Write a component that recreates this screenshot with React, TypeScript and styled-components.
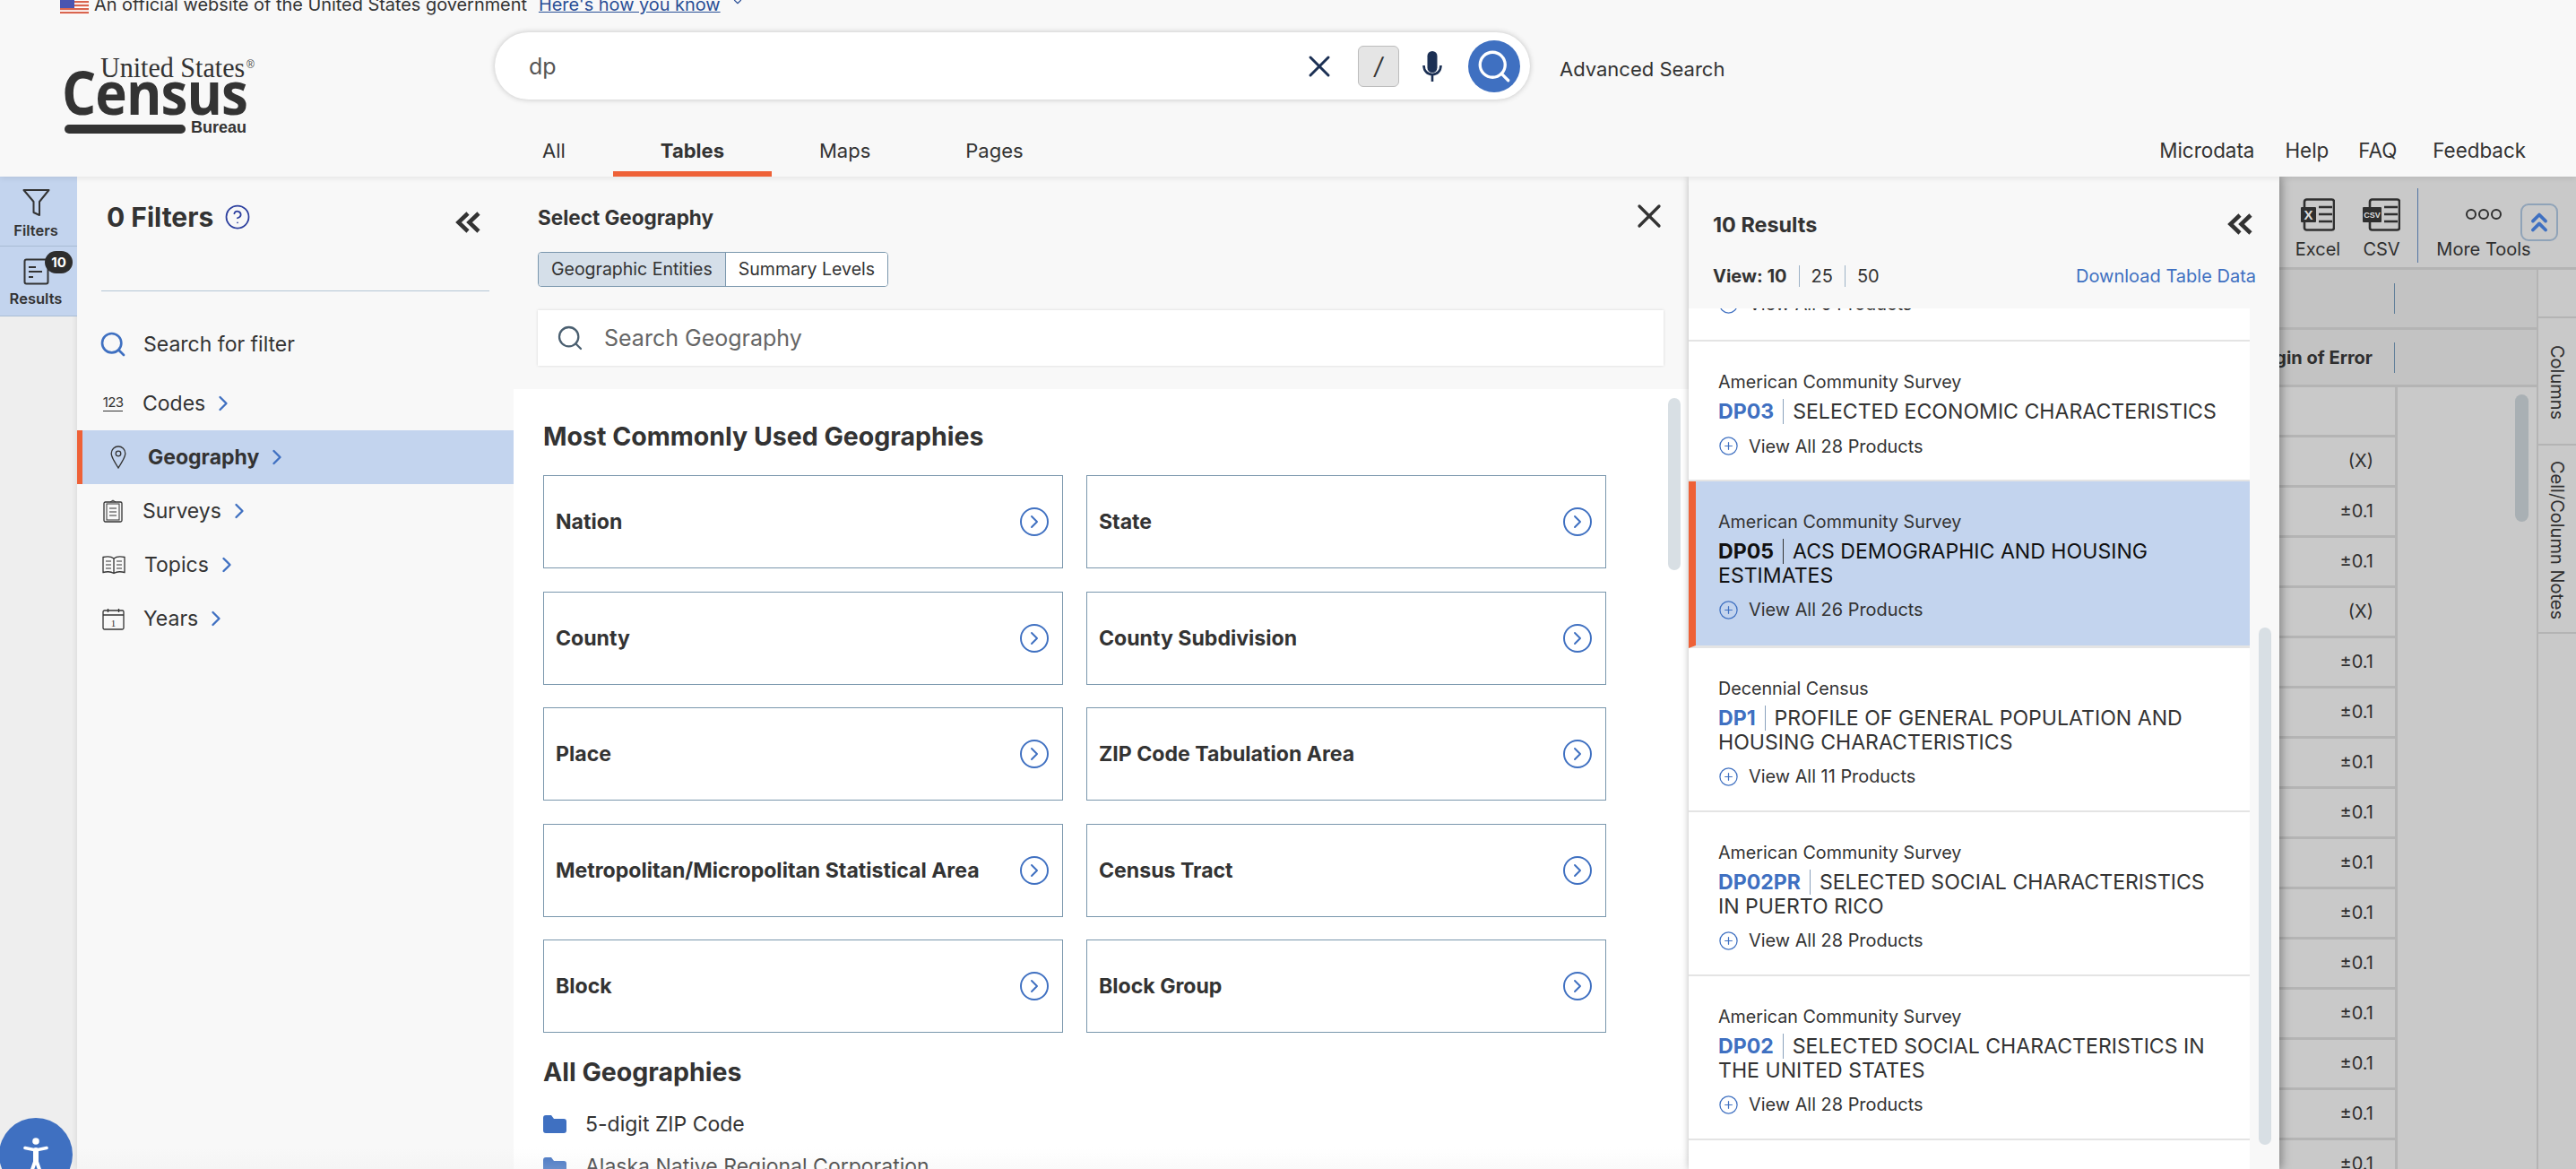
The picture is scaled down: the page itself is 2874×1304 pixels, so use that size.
import * as React from 'react';
import styled, { createGlobalStyle } from 'styled-components';
import {
  ChevronDown,
  ChevronRight,
  ChevronsUp,
  CircleChevronRight,
  CirclePlus,
  CircleHelp,
  Search,
  X,
} from 'lucide-react';

const Color = {
  text: '#333333',
  blue: '#3f70c1',
  orange: '#ee6137',
  selected: '#c3d4ee',
  panel: '#f8f8f8',
  cardBorder: '#7a97ad',
  dim: '#c9c9c9',
  dimHeader: '#c3c3c3',
  dimLine: '#b4b4b4',
};

const FONT = '"Inter", "Liberation Sans", sans-serif';

const GlobalStyle = createGlobalStyle`
  html, body { margin: 0; padding: 0; background: #f8f8f8; }
  body { font-family: ${FONT}; color: ${Color.text}; }
  * { box-sizing: border-box; }
`;

const S = {
  Page: styled.div`
    position: relative;
    width: 2874px;
    height: 1304px;
    overflow: hidden;
    display: flex;
    flex-direction: column;
  `,
  Header: styled.header`
    flex: 0 0 197px;
    background: ${Color.panel};
    display: flex;
    flex-direction: column;
    position: relative;
    z-index: 3;
    box-shadow: 0 2px 6px rgba(0, 0, 0, 0.08);
  `,
  Banner: styled.div`
    flex: 0 0 18px;
    padding-left: 67px;
    display: flex;
    align-items: flex-start;
    gap: 6px;
    overflow: hidden;
    font-size: 19.9px;
    line-height: 24px;
    white-space: nowrap;
  `,
  BannerText: styled.span`
    margin-top: -7px;
  `,
  BannerLink: styled.a`
    margin: -7px 0 0 7px;
    color: #2a4f96;
    text-decoration: underline;
  `,
  BannerChevron: styled(ChevronDown)`
    margin: -5px 0 0 6px;
    color: #2a4f96;
  `,
  Masthead: styled.div`
    flex: 0 0 98px;
    padding-left: 70px;
    display: flex;
    align-items: flex-start;
  `,
  Logo: styled.div`
    position: relative;
    flex: 0 0 482px;
    height: 98px;
  `,
  LogoTop: styled.span`
    position: absolute;
    left: 42px;
    top: 43px;
    font: 400 31px/30px 'Liberation Serif', serif;
    color: #333;
    transform: scaleX(0.97);
    transform-origin: left center;
    white-space: nowrap;
  `,
  LogoReg: styled.span`
    position: absolute;
    left: 205px;
    top: 47px;
    font: 400 12px/14px 'Liberation Sans', sans-serif;
    color: #444;
  `,
  LogoMain: styled.span`
    position: absolute;
    left: -1px;
    top: 49px;
    font: 700 66px/70px 'Open Sans', sans-serif;
    letter-spacing: -1px;
    color: #333;
    transform: scaleX(0.91);
    transform-origin: left center;
  `,
  LogoBar: styled.span`
    position: absolute;
    left: 2px;
    top: 121px;
    width: 135px;
    height: 10px;
    border-radius: 5px;
    background: #333;
  `,
  LogoBureau: styled.span`
    position: absolute;
    left: 143px;
    top: 114px;
    font: 700 18px/20px 'Liberation Sans', sans-serif;
    color: #333;
  `,
  SearchBar: styled.div`
    flex: 0 0 1155px;
    height: 75px;
    margin-top: 18px;
    padding: 0 11px 0 38px;
    background: #fff;
    border-radius: 38px;
    box-shadow: 0 0 6px rgba(0, 0, 0, 0.22);
    display: flex;
    align-items: center;
    font-size: 25px;
    color: #555;
  `,
  SearchValue: styled.span`
    flex: 1;
  `,
  ClearIcon: styled(X)`
    color: #1c3054;
    margin-right: 23px;
  `,
  SlashKey: styled.span`
    width: 46px;
    height: 46px;
    background: #e5e5e5;
    border: 1px solid #bdbdbd;
    border-radius: 6px;
    display: flex;
    align-items: center;
    justify-content: center;
    font-size: 26px;
    font-style: italic;
    color: #333;
    margin-right: 26px;
  `,
  MicSvg: styled.svg`
    margin-right: 29px;
  `,
  SearchButton: styled.span`
    width: 58px;
    height: 58px;
    border-radius: 50%;
    background: ${Color.blue};
    color: #fff;
    display: flex;
    align-items: center;
    justify-content: center;
  `,
  AdvancedSearch: styled.a`
    margin: 46px 0 0 33px;
    font-size: 22px;
    line-height: 26px;
  `,
  NavRow: styled.nav`
    flex: 1;
    padding: 0 56px 0 552px;
    display: flex;
    align-items: stretch;
  `,
  Tab: styled.a<{ $active?: boolean }>`
    padding: 37px 53px 0;
    font-size: 22px;
    line-height: 30px;
    font-weight: ${({ $active }) => ($active ? 700 : 400)};
    border-bottom: 6px solid ${({ $active }) => ($active ? Color.orange : 'transparent')};
  `,
  NavSpacer: styled.div`
    flex: 1;
  `,
  NavLink: styled.a<{ $gap: number }>`
    margin-left: ${({ $gap }) => $gap}px;
    padding-top: 37px;
    font-size: 22.4px;
    line-height: 30px;
  `,

  Workspace: styled.main`
    flex: 1;
    display: flex;
    min-height: 0;
  `,

  Rail: styled.div`
    flex: 0 0 86px;
    background: #eeeeee;
  `,
  RailItem: styled.div`
    position: relative;
    height: 78px;
    background: ${Color.selected};
    border-bottom: 1px solid #a9bcd4;
    display: flex;
    flex-direction: column;
    align-items: center;
    padding: 13px 6px 0 0;
    font-size: 16.5px;
    font-weight: 600;
    line-height: 18px;
    gap: 6px;
  `,
  RailBadge: styled.span`
    position: absolute;
    left: 50px;
    top: 5px;
    width: 31px;
    height: 25px;
    border-radius: 13px;
    background: #2d2d2d;
    color: #fff;
    font-size: 15px;
    font-weight: 700;
    line-height: 25px;
    text-align: center;
  `,

  FilterPanel: styled.aside`
    flex: 0 0 487px;
    background: ${Color.panel};
    box-shadow: -2px 0 5px rgba(0, 0, 0, 0.07), 1px 0 2px rgba(0, 0, 0, 0.05);
    display: flex;
    flex-direction: column;
  `,
  FilterHead: styled.div`
    flex: 0 0 128px;
    margin: 0 27px;
    padding: 27px 0 0 6px;
    border-bottom: 1px solid #b4c6d6;
    display: flex;
    align-items: flex-start;
    font-size: 30px;
    font-weight: 700;
    line-height: 36px;
  `,
  HelpIcon: styled(CircleHelp)`
    color: #2c3f9e;
    margin: 3px 0 0 12px;
  `,
  FilterCollapse: styled.span`
    margin: 12px 10px 0 auto;
    display: flex;
  `,
  FilterSearch: styled.div`
    flex: 0 0 66px;
    margin: 26px 0 3px;
    padding-left: 24px;
    display: flex;
    align-items: center;
    gap: 18px;
    font-size: 23px;
    color: #333;
  `,
  FilterRow: styled.div<{ $active?: boolean }>`
    flex: 0 0 60px;
    display: flex;
    align-items: center;
    padding-left: 28px;
    font-size: 23px;
    font-weight: ${({ $active }) => ($active ? 700 : 400)};
    background: ${({ $active }) => ($active ? Color.selected : 'transparent')};
    border-left: ${({ $active }) => ($active ? `6px solid ${Color.orange}` : 'none')};
  `,
  FilterIcon: styled.span`
    flex: 0 0 24px;
    margin-right: 21px;
    display: flex;
    justify-content: center;
  `,
  CodesGlyph: styled.span`
    font-size: 15px;
    line-height: 15px;
    padding-bottom: 2px;
    border-bottom: 1px solid #333;
    letter-spacing: -0.6px;
  `,
  RowChevron: styled(ChevronRight)`
    color: ${Color.blue};
    margin-left: 6px;
  `,

  GeoPanel: styled.section`
    position: relative;
    flex: 0 0 1311px;
    background: #fff;
    display: flex;
    flex-direction: column;
    overflow: hidden;
  `,
  GeoHead: styled.div`
    flex: 0 0 237px;
    background: ${Color.panel};
    padding: 32px 28px 0 27px;
    display: flex;
    flex-direction: column;
    align-items: flex-start;
  `,
  GeoTitle: styled.h2`
    margin: 0;
    font-size: 22.5px;
    line-height: 28px;
    font-weight: 700;
  `,
  GeoClose: styled(X)`
    position: absolute;
    right: 22px;
    top: 22px;
    color: #333;
  `,
  Toggle: styled.div`
    margin-top: 24px;
    display: flex;
    height: 39px;
    border: 1px solid ${Color.cardBorder};
    border-radius: 4px;
    overflow: hidden;
    background: #fff;
  `,
  ToggleItem: styled.span<{ $active?: boolean }>`
    padding: 0 14px;
    font-size: 19.5px;
    line-height: 37px;
    background: ${({ $active }) => ($active ? '#d5dfe9' : '#fff')};
    border-right: ${({ $active }) => ($active ? `1px solid ${Color.cardBorder}` : 'none')};
  `,
  GeoSearch: styled.div`
    margin-top: 26px;
    align-self: stretch;
    height: 62px;
    background: #fff;
    box-shadow: 0 0 3px rgba(0, 0, 0, 0.14);
    padding-left: 20px;
    display: flex;
    align-items: center;
    gap: 22px;
    font-size: 25px;
    color: #666;
  `,
  GeoBody: styled.div`
    flex: 1;
    padding: 35px 0 0 33px;
    display: flex;
    flex-direction: column;
    min-height: 0;
  `,
  SectionTitle: styled.h3`
    margin: 0;
    font-size: 28.5px;
    line-height: 36px;
    font-weight: 700;
  `,
  Cards: styled.div`
    margin-top: 25px;
    display: grid;
    grid-template-columns: 580px 580px;
    grid-auto-rows: 104px;
    column-gap: 26px;
    row-gap: 25.5px;
  `,
  Card: styled.div`
    padding: 0 13px 0 13px;
    background: #fff;
    border: 1px solid ${Color.cardBorder};
    display: flex;
    align-items: center;
    justify-content: space-between;
    font-size: 23.1px;
    font-weight: 700;
  `,
  CardIcon: styled(CircleChevronRight)`
    color: ${Color.blue};
  `,
  AllTitle: styled.h3`
    margin: 26px 0 0;
    font-size: 28.5px;
    line-height: 36px;
    font-weight: 700;
  `,
  FolderRow: styled.div`
    margin-top: 26px;
    height: 36px;
    display: flex;
    align-items: center;
    gap: 21px;
    font-size: 23px;
    white-space: nowrap;
    & + & {
      margin-top: 19px;
    }
  `,
  GeoScroll: styled.div`
    position: absolute;
    right: 9px;
    top: 247px;
    width: 14px;
    height: 192px;
    border-radius: 7px;
    background: #d8dfe4;
  `,

  ResultsPanel: styled.section`
    position: relative;
    z-index: 2;
    flex: 0 0 659px;
    background: ${Color.panel};
    box-shadow: 0 0 8px rgba(0, 0, 0, 0.18), 4px 0 10px rgba(0, 0, 0, 0.22);
    display: flex;
    flex-direction: column;
    overflow: hidden;
  `,
  ResultsHead: styled.div`
    flex: 0 0 147px;
    padding: 0 26px 0 27px;
    display: flex;
    flex-direction: column;
  `,
  ResultsTitleRow: styled.div`
    height: 86px;
    padding: 20px 4px 0 0;
    display: flex;
    align-items: center;
    justify-content: space-between;
    font-size: 23.4px;
    font-weight: 700;
  `,
  ViewRow: styled.div`
    display: flex;
    align-items: center;
    font-size: 20px;
    height: 30px;
    margin-top: 10px;
  `,
  ViewOption: styled.span<{ $current?: boolean }>`
    font-weight: ${({ $current }) => ($current ? 700 : 400)};
    padding: 0 13px;
    line-height: 24px;
    border-left: ${({ $current }) => ($current ? 'none' : '1px solid #9db2c6')};
    &:first-child {
      padding-left: 0;
    }
  `,
  DownloadLink: styled.a`
    margin-left: auto;
    color: ${Color.blue};
  `,
  ResultsList: styled.div`
    flex: 1;
    width: 626px;
    background: #fff;
    display: flex;
    flex-direction: column;
    min-height: 0;
  `,
  ClippedItem: styled.div`
    flex: 0 0 37px;
    display: flex;
    flex-direction: column;
    justify-content: flex-end;
    padding: 0 0 27px 33px;
    overflow: hidden;
    border-bottom: 2px solid #e4e4e4;
  `,
  ResultItem: styled.article<{ $selected?: boolean; $tall?: boolean }>`
    flex: 0 0 auto;
    padding: 32px 28px 0 ${({ $selected }) => ($selected ? '25px' : '33px')};
    height: ${({ $selected, $tall }) => ($selected ? '186px' : $tall ? '183px' : '156px')};
    background: ${({ $selected }) => ($selected ? Color.selected : '#fff')};
    border-left: ${({ $selected }) => ($selected ? `8px solid ${Color.orange}` : 'none')};
    border-bottom: ${({ $selected }) => ($selected ? '3px solid #e4e4e4' : '2px solid #e4e4e4')};
  `,
  Source: styled.div`
    font-size: 19.7px;
    line-height: 26px;
  `,
  ItemTitle: styled.div<{ $selected?: boolean }>`
    margin-top: 7px;
    font-size: 23.1px;
    line-height: 26.5px;
    color: ${({ $selected }) => ($selected ? '#111' : Color.text)};
  `,
  Code: styled.b<{ $selected?: boolean }>`
    color: ${({ $selected }) => ($selected ? '#111' : Color.blue)};
    font-weight: 700;
    padding-right: 10px;
    margin-right: 10px;
    border-right: 1px solid ${({ $selected }) => ($selected ? '#333' : '#8aa2bd')};
  `,
  ViewAll: styled.div`
    margin-top: 12px;
    display: flex;
    align-items: center;
    gap: 11px;
    font-size: 19.9px;
    line-height: 26px;
  `,
  PlusIcon: styled(CirclePlus)`
    color: ${Color.blue};
  `,
  ResultsScroll: styled.div`
    position: absolute;
    left: 636px;
    top: 503px;
    width: 14px;
    height: 577px;
    border-radius: 7px;
    background: #d8dfe4;
  `,

  TableBackdrop: styled.div`
    flex: 0 0 331px;
    position: relative;
    background: ${Color.dim};
    display: grid;
    grid-template-columns: 287px 44px;
    grid-template-rows: 104px 1fr;
    overflow: hidden;
    color: #2f2f2f;
  `,
  Toolbar: styled.div`
    grid-column: 1 / 3;
    padding-top: 13px;
    display: flex;
    border-bottom: 3px solid ${Color.dimLine};
    font-size: 20px;
  `,
  Tool: styled.div<{ $width: number }>`
    flex: 0 0 ${({ $width }) => $width}px;
    display: flex;
    flex-direction: column;
    align-items: center;
    gap: 8px;
    padding-top: 11px;
    line-height: 24px;
    white-space: nowrap;
  `,
  ToolDivider: styled.div`
    flex: 0 0 1px;
    height: 83px;
    margin-left: 12px;
    background: #5274a4;
  `,
  ToolIcon: styled.svg`
    display: block;
  `,
  UpToggle: styled.span`
    position: absolute;
    left: 269px;
    top: 30px;
    width: 42px;
    height: 42px;
    border: 2px solid #8fa3b8;
    border-radius: 9px;
    color: ${Color.blue};
    display: flex;
    align-items: center;
    justify-content: center;
  `,
  TableMain: styled.div`
    display: flex;
    flex-direction: column;
    min-height: 0;
  `,
  HeadRow: styled.div<{ $height: number }>`
    flex: 0 0 ${({ $height }) => $height}px;
    background: ${Color.dimHeader};
    border-bottom: 3px solid ${Color.dimLine};
    display: flex;
    align-items: center;
  `,
  HeadCell: styled.div`
    flex: 0 0 129px;
    height: 34px;
    border-right: 1px solid #62809a;
    font-size: 20px;
    font-weight: 700;
    line-height: 34px;
    text-align: right;
    padding-right: 24px;
    white-space: nowrap;
    direction: rtl;
    overflow: hidden;
  `,
  DataRow: styled.div`
    flex: 0 0 56px;
    width: 132px;
    border-bottom: 3px solid ${Color.dimLine};
    border-right: 3px solid ${Color.dimLine};
    font-size: 20px;
    line-height: 53px;
    text-align: right;
    padding-right: 24px;
  `,
  TableScroll: styled.div`
    position: absolute;
    left: 263px;
    top: 243px;
    width: 15px;
    height: 142px;
    border-radius: 8px;
    background: #a9b0b4;
  `,
  TabStrip: styled.div`
    border-left: 2px solid ${Color.dimLine};
    display: flex;
    flex-direction: column;
  `,
  StripBlank: styled.div`
    flex: 0 0 54px;
    border-bottom: 2px solid ${Color.dimLine};
  `,
  StripTab: styled.div<{ $height: number; $top: number }>`
    flex: 0 0 ${({ $height }) => $height}px;
    border-bottom: 2px solid ${Color.dimLine};
    padding-top: ${({ $top }) => $top}px;
    display: flex;
    justify-content: center;
  `,
  StripLabel: styled.span`
    writing-mode: vertical-rl;
    font-size: 20px;
    line-height: 24px;
    white-space: nowrap;
  `,

  A11yButton: styled.span`
    position: absolute;
    left: -1px;
    top: 1247px;
    width: 82px;
    height: 82px;
    border-radius: 50%;
    background: ${Color.blue};
    z-index: 4;
    display: flex;
    justify-content: center;
    padding-top: 22px;
  `,
  BottomFade: styled.div`
    position: absolute;
    left: 86px;
    right: 331px;
    bottom: 0;
    height: 24px;
    z-index: 1;
    pointer-events: none;
    background: linear-gradient(rgba(235, 235, 235, 0), rgba(235, 235, 235, 0.25));
  `,
};

const svgLine = { fill: 'none', stroke: '#333', strokeWidth: 1.3 };

const PinIcon = () => (
  <svg width="18" height="26" viewBox="0 0 18 26" {...svgLine}>
    <path d="M9 25C5 18 1.2 13.5 1.2 8.8a7.8 7.8 0 0 1 15.6 0C16.8 13.5 13 18 9 25z" />
    <circle cx="9" cy="9" r="2.8" />
  </svg>
);

const SurveyIcon = () => (
  <svg width="22" height="26" viewBox="0 0 22 26" {...svgLine}>
    <rect x="1" y="3" width="20" height="22" rx="1.5" />
    <rect x="4" y="5" width="14" height="18" strokeWidth="1" />
    <path d="M8 3l3-2 3 2M7 10h8M7 14h8M7 18h8" strokeWidth="1" />
  </svg>
);

const BookIcon = () => (
  <svg width="26" height="22" viewBox="0 0 26 22" {...svgLine}>
    <path d="M13 4C10 1.5 5 1.5 1 2.5v17c4-1 9-1 12 1 3-2 8-2 12-1v-17c-4-1-9-1-12 1.5zM13 4v16.5" />
    <path d="M4 7h6M4 11h6M4 15h6M16 7h6M16 11h6M16 15h6" strokeWidth="1" />
  </svg>
);

const YearIcon = () => (
  <svg width="25" height="25" viewBox="0 0 25 25" {...svgLine}>
    <rect x="1" y="3" width="23" height="21" rx="1.5" />
    <path d="M1 8h23M6.5 1v4M18.5 1v4" />
    <text x="12.5" y="20.5" textAnchor="middle" fontSize="11" fill="#333" stroke="none" fontFamily="Liberation Serif">
      1
    </text>
  </svg>
);

const FILTERS: Array<{ label: string; icon: React.ReactNode; active?: boolean }> = [
  { label: 'Codes', icon: <S.CodesGlyph>123</S.CodesGlyph> },
  { label: 'Geography', icon: <PinIcon />, active: true },
  { label: 'Surveys', icon: <SurveyIcon /> },
  { label: 'Topics', icon: <BookIcon /> },
  { label: 'Years', icon: <YearIcon /> },
];

const GEOGRAPHIES = [
  'Nation',
  'State',
  'County',
  'County Subdivision',
  'Place',
  'ZIP Code Tabulation Area',
  'Metropolitan/Micropolitan Statistical Area',
  'Census Tract',
  'Block',
  'Block Group',
];

const RESULTS = [
  {
    source: 'American Community Survey',
    code: 'DP03',
    title: 'SELECTED ECONOMIC CHARACTERISTICS',
    products: 28,
  },
  {
    source: 'American Community Survey',
    code: 'DP05',
    title: 'ACS DEMOGRAPHIC AND HOUSING ESTIMATES',
    products: 26,
    selected: true,
    tall: true,
  },
  {
    source: 'Decennial Census',
    code: 'DP1',
    title: 'PROFILE OF GENERAL POPULATION AND HOUSING CHARACTERISTICS',
    products: 11,
    tall: true,
  },
  {
    source: 'American Community Survey',
    code: 'DP02PR',
    title: 'SELECTED SOCIAL CHARACTERISTICS IN PUERTO RICO',
    products: 28,
    tall: true,
  },
  {
    source: 'American Community Survey',
    code: 'DP02',
    title: 'SELECTED SOCIAL CHARACTERISTICS IN THE UNITED STATES',
    products: 28,
    tall: true,
  },
];

const ROW_VALUES = ['', '(X)', '±0.1', '±0.1', '(X)', '±0.1', '±0.1', '±0.1', '±0.1', '±0.1', '±0.1', '±0.1', '±0.1', '±0.1', '±0.1', '±0.1'];

const Flag = () => (
  <svg width="32" height="17" viewBox="0 0 32 17">
    <rect width="32" height="17" fill="#fff" />
    {[1, 5, 9, 13].map((y) => (
      <rect key={y} y={y} width="32" height="2.2" fill="#d9654f" />
    ))}
    <rect width="16" height="9" fill="#4a55b0" />
  </svg>
);

const CollapseIcon = () => (
  <svg width="28" height="24" viewBox="0 0 28 24" fill="none" stroke="#333" strokeWidth="4.6">
    <path d="M14 2L3.5 12 14 22M26 2L15.5 12 26 22" />
  </svg>
);

const MicIcon = () => (
  <S.MicSvg width="22" height="34" viewBox="0 0 22 34" fill="none" stroke="#1c3054" strokeWidth="2.6">
    <rect x="5.5" y="0" width="11" height="24" rx="5.5" fill="#1c3054" stroke="none" />
    <path d="M1.5 16c0 6 4 10 9.5 10s9.5-4 9.5-10M11 26v8" />
  </S.MicSvg>
);

const FunnelIcon = () => (
  <svg width="31" height="32" viewBox="0 0 31 32" fill="none" stroke="#333" strokeWidth="2" strokeLinejoin="round">
    <path d="M1.5 2h28L19 15v15l-6.5-3V15z" />
  </svg>
);

const ResultsIcon = () => (
  <svg width="29" height="30" viewBox="0 0 29 30" fill="none" stroke="#333" strokeWidth="2">
    <rect x="1.5" y="1.5" width="26" height="27" rx="2" />
    <path d="M6 10h8M6 15h15M6 21h5" />
  </svg>
);

const FolderIcon = () => (
  <svg width="26" height="20" viewBox="0 0 26 20">
    <path d="M0 3a3 3 0 0 1 3-3h6l3 4h11a3 3 0 0 1 3 3v10a3 3 0 0 1-3 3H3a3 3 0 0 1-3-3z" fill="#3f70c1" />
  </svg>
);

const A11yIcon = () => (
  <svg width="28" height="50" viewBox="0 0 28 50" fill="none" stroke="#fff" strokeLinecap="round">
    <circle cx="14" cy="4" r="3.8" fill="#fff" stroke="none" />
    <path d="M2 11.5L14 14l12-2.5" strokeWidth="3.6" />
    <path d="M14 14v13" strokeWidth="6" />
    <path d="M13 27L7 44M15 27l6 17" strokeWidth="4" />
  </svg>
);

const SheetIcon = ({ badge, badgeWidth }: { badge: string; badgeWidth: number }) => {
  const left = badgeWidth - 13;
  const lineLength = left + 28 - badgeWidth;
  return (
    <S.ToolIcon width={left + 34} height="37" viewBox={`0 0 ${left + 34} 37`}>
      <rect x={left} y="1.5" width="33" height="34" rx="2.5" fill="none" stroke="#2f2f2f" strokeWidth="2.6" />
      <path
        d={`M${badgeWidth + 3} 10h${lineLength}M${badgeWidth + 3} 18h${lineLength}M${badgeWidth + 3} 26h${lineLength}`}
        stroke="#2f2f2f"
        strokeWidth="2.6"
      />
      <rect x="0" y="10" width={badgeWidth} height="17" rx="1" fill="#2f2f2f" />
      <text
        x={badgeWidth / 2}
        y={badge.length > 1 ? 22 : 24}
        textAnchor="middle"
        fontSize={badge.length > 1 ? 9 : 15}
        fontWeight="700"
        fill="#ddd"
        fontFamily="Liberation Sans"
      >
        {badge}
      </text>
    </S.ToolIcon>
  );
};

const App = () => (
  <>
    <GlobalStyle />
    <S.Page>
      <S.Header>
        <S.Banner>
          <Flag />
          <S.BannerText>An official website of the United States government</S.BannerText>
          <S.BannerLink>Here's how you know</S.BannerLink>
          <S.BannerChevron size={14} />
        </S.Banner>
        <S.Masthead>
          <S.Logo>
            <S.LogoTop>United States</S.LogoTop>
            <S.LogoReg>®</S.LogoReg>
            <S.LogoMain>Census</S.LogoMain>
            <S.LogoBar />
            <S.LogoBureau>Bureau</S.LogoBureau>
          </S.Logo>
          <S.SearchBar>
            <S.SearchValue>dp</S.SearchValue>
            <S.ClearIcon size={40} strokeWidth={1.8} />
            <S.SlashKey>/</S.SlashKey>
            <MicIcon />
            <S.SearchButton>
              <Search size={42} strokeWidth={1.9} />
            </S.SearchButton>
          </S.SearchBar>
          <S.AdvancedSearch>Advanced Search</S.AdvancedSearch>
        </S.Masthead>
        <S.NavRow>
          <S.Tab>All</S.Tab>
          <S.Tab $active>Tables</S.Tab>
          <S.Tab>Maps</S.Tab>
          <S.Tab>Pages</S.Tab>
          <S.NavSpacer />
          <S.NavLink $gap={0}>Microdata</S.NavLink>
          <S.NavLink $gap={34}>Help</S.NavLink>
          <S.NavLink $gap={33}>FAQ</S.NavLink>
          <S.NavLink $gap={40}>Feedback</S.NavLink>
        </S.NavRow>
      </S.Header>

      <S.Workspace>
        <S.Rail>
          <S.RailItem>
            <FunnelIcon />
            Filters
          </S.RailItem>
          <S.RailItem>
            <ResultsIcon />
            Results
            <S.RailBadge>10</S.RailBadge>
          </S.RailItem>
        </S.Rail>

        <S.FilterPanel>
          <S.FilterHead>
            0 Filters
            <S.HelpIcon size={30} strokeWidth={1.4} />
            <S.FilterCollapse>
              <CollapseIcon />
            </S.FilterCollapse>
          </S.FilterHead>
          <S.FilterSearch>
            <Search size={32} color={Color.blue} strokeWidth={2} />
            Search for filter
          </S.FilterSearch>
          {FILTERS.map((f) => (
            <S.FilterRow key={f.label} $active={f.active}>
              <S.FilterIcon>{f.icon}</S.FilterIcon>
              {f.label}
              <S.RowChevron size={28} strokeWidth={2} />
            </S.FilterRow>
          ))}
        </S.FilterPanel>

        <S.GeoPanel>
          <S.GeoHead>
            <S.GeoTitle>Select Geography</S.GeoTitle>
            <S.GeoClose size={44} strokeWidth={1.8} />
            <S.Toggle>
              <S.ToggleItem $active>Geographic Entities</S.ToggleItem>
              <S.ToggleItem>Summary Levels</S.ToggleItem>
            </S.Toggle>
            <S.GeoSearch>
              <Search size={32} color="#4a5f70" strokeWidth={1.7} />
              Search Geography
            </S.GeoSearch>
          </S.GeoHead>
          <S.GeoBody>
            <S.SectionTitle>Most Commonly Used Geographies</S.SectionTitle>
            <S.Cards>
              {GEOGRAPHIES.map((g) => (
                <S.Card key={g}>
                  {g}
                  <S.CardIcon size={36} strokeWidth={1.3} />
                </S.Card>
              ))}
            </S.Cards>
            <S.AllTitle>All Geographies</S.AllTitle>
            <S.FolderRow>
              <FolderIcon />
              5-digit ZIP Code
            </S.FolderRow>
            <S.FolderRow>
              <FolderIcon />
              Alaska Native Regional Corporation
            </S.FolderRow>
          </S.GeoBody>
          <S.GeoScroll />
        </S.GeoPanel>

        <S.ResultsPanel>
          <S.ResultsHead>
            <S.ResultsTitleRow>
              10 Results
              <CollapseIcon />
            </S.ResultsTitleRow>
            <S.ViewRow>
              <S.ViewOption $current>View: 10</S.ViewOption>
              <S.ViewOption>25</S.ViewOption>
              <S.ViewOption>50</S.ViewOption>
              <S.DownloadLink>Download Table Data</S.DownloadLink>
            </S.ViewRow>
          </S.ResultsHead>
          <S.ResultsList>
            <S.ClippedItem>
              <S.ViewAll>
                <S.PlusIcon size={23} strokeWidth={1.3} />
                View All 5 Products
              </S.ViewAll>
            </S.ClippedItem>
            {RESULTS.map((r) => (
              <S.ResultItem key={r.code} $selected={r.selected} $tall={r.tall}>
                <S.Source>{r.source}</S.Source>
                <S.ItemTitle $selected={r.selected}>
                  <S.Code $selected={r.selected}>{r.code}</S.Code>
                  {r.title}
                </S.ItemTitle>
                <S.ViewAll>
                  <S.PlusIcon size={23} strokeWidth={1.3} />
                  View All {r.products} Products
                </S.ViewAll>
              </S.ResultItem>
            ))}
          </S.ResultsList>
          <S.ResultsScroll />
        </S.ResultsPanel>

        <S.TableBackdrop>
          <S.Toolbar>
            <S.Tool $width={86}>
              <SheetIcon badge="X" badgeWidth={17} />
              Excel
            </S.Tool>
            <S.Tool $width={56}>
              <SheetIcon badge="CSV" badgeWidth={21} />
              CSV
            </S.Tool>
            <S.ToolDivider />
            <S.Tool $width={146}>
              <S.ToolIcon width="42" height="37" viewBox="0 0 42 37" fill="none" stroke="#2f2f2f" strokeWidth="2">
                <circle cx="7" cy="18" r="5" />
                <circle cx="21" cy="18" r="5" />
                <circle cx="35" cy="18" r="5" />
              </S.ToolIcon>
              More Tools
            </S.Tool>
          </S.Toolbar>
          <S.TableMain>
            <S.HeadRow $height={67}>
              <S.HeadCell />
            </S.HeadRow>
            <S.HeadRow $height={64}>
              <S.HeadCell>Margin of Error</S.HeadCell>
            </S.HeadRow>
            {ROW_VALUES.map((v, i) => (
              <S.DataRow key={i}>{v}</S.DataRow>
            ))}
          </S.TableMain>
          <S.TabStrip>
            <S.StripBlank />
            <S.StripTab $height={142} $top={30}>
              <S.StripLabel>Columns</S.StripLabel>
            </S.StripTab>
            <S.StripTab $height={210} $top={17}>
              <S.StripLabel>Cell/Column Notes</S.StripLabel>
            </S.StripTab>
          </S.TabStrip>
          <S.UpToggle>
            <ChevronsUp size={34} strokeWidth={2.6} />
          </S.UpToggle>
          <S.TableScroll />
        </S.TableBackdrop>
      </S.Workspace>
      <S.BottomFade />
      <S.A11yButton>
        <A11yIcon />
      </S.A11yButton>
    </S.Page>
  </>
);

export default App;
